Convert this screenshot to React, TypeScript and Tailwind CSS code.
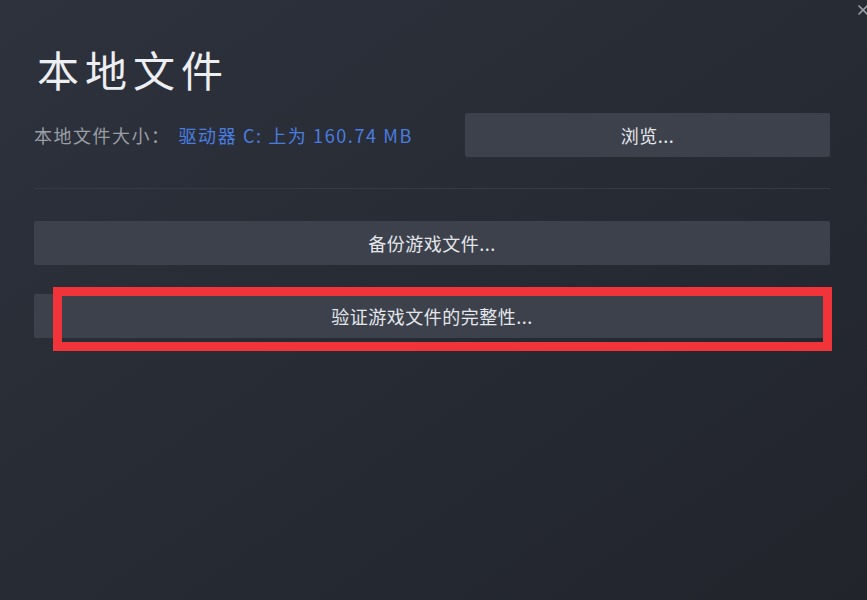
import { X } from "lucide-react";

const font = { fontFamily: '"Noto Sans CJK SC", "Noto Sans", sans-serif' };

const ActionButton = ({ label, className = "" }: { label: string; className?: string }) => (
  <button
    className={`h-[44px] rounded-[2px] bg-[#3c414c] text-[18px] tracking-[0.5px] text-[#e4e6ea] ${className}`}
  >
    {label}
  </button>
);

export default function App() {
  return (
    <div
      style={font}
      className="relative h-[600px] w-[867px] overflow-hidden bg-gradient-to-br from-[#2d323c] via-[#272b34] to-[#21242b]"
    >
      {/* close button, cut off by the window edge */}
      <div className="absolute right-[-4px] top-[2px] text-[#9aa0a8]">
        <X size={16} strokeWidth={2.5} />
      </div>

      <div className="flex flex-col pl-[34px] pr-[37px] pt-[42px]">
        <h1 className="pl-[3px] text-[42px] leading-[54px] tracking-[6px] text-[#eceef1]">
          本地文件
        </h1>

        <div className="mt-[17px] flex items-center">
          <span className="text-[18px] tracking-[1.5px] text-[#9a9ea6]">本地文件大小：</span>
          <span className="ml-[8px] text-[18px] tracking-[1.6px] text-[#4a7de0]">驱动器 C: 上为 160.74 MB</span>
          <div className="flex-1" />
          <ActionButton label="浏览..." className="w-[365px]" />
        </div>

        <div className="mt-[31px] h-px bg-[#363a44]" />

        <ActionButton label="备份游戏文件..." className="mt-[32px] w-full" />

        <div className="relative mt-[29px]">
          <ActionButton label="验证游戏文件的完整性..." className="w-full" />
          {/* red highlight frame */}
          <div className="pointer-events-none absolute left-[19px] right-[-2px] top-[-7px] bottom-[-13px] border-[9px] border-[#f0343a]" />
        </div>
      </div>
    </div>
  );
}
